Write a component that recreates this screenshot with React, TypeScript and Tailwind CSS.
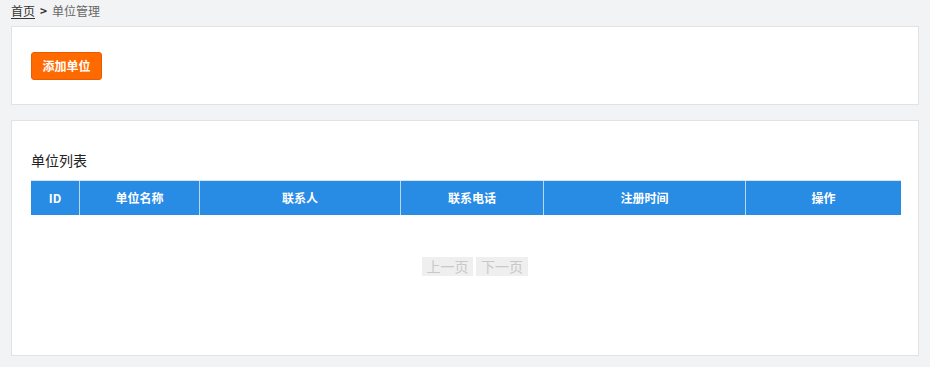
const font = { fontFamily: '"Microsoft YaHei", "Noto Sans CJK SC", sans-serif' }

const columns = [
  { label: 'ID', w: 'w-[48px]' },
  { label: '单位名称', w: 'w-[120px]' },
  { label: '联系人', w: 'w-[201px]' },
  { label: '联系电话', w: 'w-[143px]' },
  { label: '注册时间', w: 'w-[202px]' },
  { label: '操作', w: 'flex-1' },
]

export default function App() {
  return (
    <div className="h-[367px] bg-[#f2f3f5] text-[#333]" style={font}>
      <div className="flex h-[26px] items-start px-[11px] pt-[3px] text-[12px] leading-[16px]">
        <a className="text-[#333] underline underline-offset-2">首页</a>
        <span className="mx-[5px] font-bold text-[#333]">&gt;</span>
        <span className="text-[#666]">单位管理</span>
      </div>

      <div className="mx-[11px] h-[79px] border border-[#e1e2e4] bg-white pl-[19px] pt-[25px]">
        <button className="h-[28px] w-[71px] rounded-[3px] border border-[#e85d00] bg-[#ff6a00] text-[12px] font-bold text-white">
          添加单位
        </button>
      </div>

      <div className="mx-[11px] mt-[15px] h-[236px] border border-[#e1e2e4] bg-white pl-[19px] pr-[17px] pt-[29px]">
        <h2 className="h-[30px] text-[14px] leading-[20px] text-[#222]">单位列表</h2>
        <div className="flex h-[35px] border-t border-[#d6e6f6] bg-[#288be4]">
          {columns.map((c, i) => (
            <div
              key={c.label}
              className={`${c.w} flex items-center justify-center text-[12px] font-bold text-white ${i > 0 ? 'border-l border-[#b9d7f3]' : ''}`}
            >
              {c.label}
            </div>
          ))}
        </div>
        <div className="mt-[42px] flex justify-center gap-[3px] pl-[18px]">
          <button className="h-[19px] w-[51px] bg-[#efefef] text-[14px] leading-[19px] text-[#c8c8c8]">上一页</button>
          <button className="h-[19px] w-[52px] bg-[#efefef] text-[14px] leading-[19px] text-[#c8c8c8]">下一页</button>
        </div>
      </div>
    </div>
  )
}
